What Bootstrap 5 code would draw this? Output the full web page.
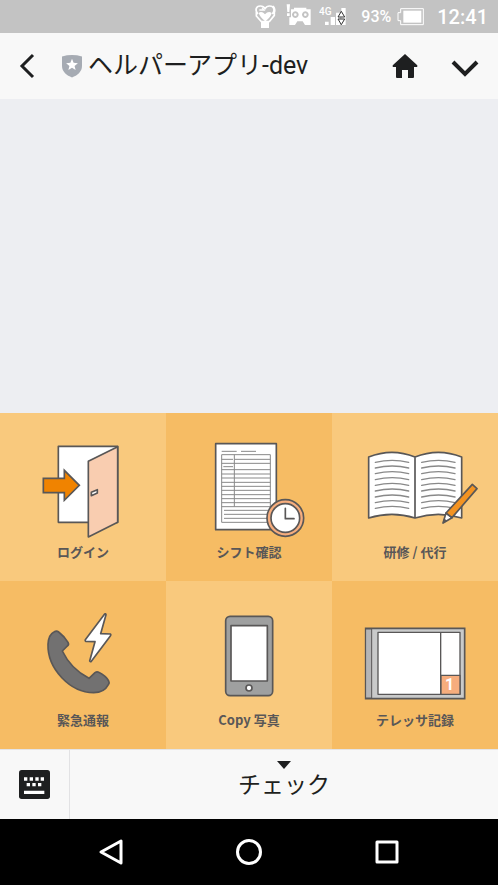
<!DOCTYPE html>
<html lang="ja">
<head>
<meta charset="utf-8">
<meta name="viewport" content="width=device-width, initial-scale=1">
<title>ヘルパーアプリ-dev</title>
<link href="https://cdn.jsdelivr.net/npm/bootstrap@5.3.0/dist/css/bootstrap.min.css" rel="stylesheet">
<style>
body{font-family:Roboto,"Noto Sans CJK JP",sans-serif;color:#1e1f20;background:#edeef2}
svg{display:block;flex:none}
.status{background:#c3c3c3;height:33px;gap:6px;padding-right:10px;color:#fff;line-height:34px}
.level{font-size:16px;font-weight:500}
.clock{font-size:20px;font-weight:500}
.bar{background:#f8f8f8}
.topbar{height:66px;padding:0 18px}
.title-text{font-size:25px;line-height:36px;font-weight:400;margin:0 0 0 6px}
.plain{border:0;padding:0;background:none;color:inherit}
.actions{gap:32px}
.tile{background:#f9c97d;color:#595757;padding-bottom:18px}
.tile-dark{background:#f6bc64}
.tile-label{font-family:"Noto Sans CJK JP",sans-serif;font-size:13px;font-weight:700;line-height:22px}
.art{stroke:#595757;stroke-width:5;stroke-linejoin:round;stroke-linecap:round;fill:#fff}
.footer-bar{height:70px;border-top:1px solid #e4e4e6}
.keys{width:70px;border-right:1px solid #e2e2e4}
.menu-text{font-size:23px;line-height:34px}
.menu-button{padding-bottom:6px}
.softkeys{background:#000;height:66px;padding:0 42px}
.softkeys svg{fill:none;stroke:#fff;stroke-width:3;stroke-linejoin:round}
</style>
<script src="https://cdn.jsdelivr.net/npm/bootstrap@5.3.0/dist/js/bootstrap.bundle.min.js"></script>
</head>
<body>
<div class="d-flex flex-column min-vh-100">
  <div class="status d-flex align-items-center justify-content-end">
    <svg width="26" height="33" viewBox="45 0 78 99" fill="none" stroke="#fff" stroke-width="5" aria-hidden="true"><path d="M57 42C47 32 50 18 64 18c8 0 12 4 14 8 3-5 8-8 14-8 14 0 17 14 8 24M52 36v12l16 18M106 36v10L90 66M102 18q8 10 4 20"/><path fill="#fff" stroke="none" d="M59 39q9-7 19 4 10-11 20-4-2 12-19 25-16-12-20-25zM66 62h24v22H66z"/><path d="M61 30h14l-6-7" stroke-width="4"/></svg>
    <svg width="27" height="33" viewBox="141 0 81 99" fill="#fff" aria-hidden="true"><path d="M143 13h10l-2 23h-6zM144 40h8v8h-8z"/><path fill-rule="evenodd" d="M156 28h9v-5h37v5h13v47h-17l-7-11h-16l-7 11h-17V52h5zM169 34a10 10 0 1 0 .1 0zM199 34a10 10 0 1 0 .1 0z"/><circle cx="169" cy="44" r="4"/><circle cx="199" cy="44" r="4"/></svg>
    <svg width="36" height="33" viewBox="240 0 108 99" fill="#fff" role="img" aria-label="4G"><text x="240" y="44" font-family="Roboto,sans-serif" font-size="30" font-weight="500">4G</text><path d="M258 65h11v10h-11zM275 51h13v24h-13zM291 38h13v37h-13zM307 24h13v51h-13z"/><path d="M297 51l10-17 10 17zM297 57l10 17 10-17z" stroke="#333" stroke-width="3"/></svg>
    <span class="level">93%</span>
    <svg width="34" height="33" viewBox="474 0 102 99" aria-hidden="true"><path d="M485 26h68v48h-68V62h-8V38h8z" fill="none" stroke="#fff" stroke-width="3"/><path d="M493 32h54v36h-54z" fill="#fff"/></svg>
    <span class="clock">12:41</span>
  </div>

  <header class="bar topbar d-flex align-items-center">
    <button class="plain" type="button" aria-label="戻る"><svg width="20" height="30" viewBox="0 0 20 30" fill="none" stroke="#1e1f20" stroke-width="3"><path d="M15 4L4 15l11 11"/></svg></button>
    <svg class="ms-4" width="20" height="24" viewBox="0 0 21 24" aria-hidden="true"><path fill="#a6abb3" d="M0 2Q10.500-1 21 2v10c0 6-5 10-10.500 12C5 22 0 18 0 12z"/><path fill="#fff" d="M10.500 4.500l1.700 4.200 4.500.3-3.500 2.900 1.100 4.400-3.800-2.400-3.800 2.400 1.100-4.400L4.300 9l4.500-.3z"/></svg>
    <h1 class="title-text">ヘルパーアプリ-dev</h1>
    <div class="actions d-flex align-items-center ms-auto">
      <button class="plain" type="button" aria-label="ホーム"><svg width="26" height="24" viewBox="0 0 26 24" fill="#1e1f20"><path d="M13 0l12 11q1 1 0 2h-3v10q0 1-1 1h-5v-8h-6v8H5q-1 0-1-1V13H1q-1-1 0-2z"/></svg></button>
      <button class="plain" type="button" aria-label="閉じる"><svg width="30" height="24" viewBox="0 0 30 24" fill="none" stroke="#1e1f20" stroke-width="4"><path d="M3 8l12 12L27 8"/></svg></button>
    </div>
  </header>

  <main class="flex-grow-1"></main>

  <nav class="row row-cols-3 g-0" aria-label="メニュー">
    <button class="col plain tile" type="button">
      <svg class="art w-100" viewBox="0 9 498 384"><path d="M175 109h178v228H175z"/><path fill="#f9cdb0" d="M265 154l88-44v227l-88 44z"/><path d="M274 247l18-8v10l-18 8z"/><path fill="#f08300" stroke-linejoin="miter" d="M130 205h63v-24l45 45-45 45v-23h-63z"/></svg>
      <span class="tile-label d-block">ログイン</span>
    </button>
    <button class="col plain tile tile-dark" type="button">
      <svg class="art w-100" viewBox="3 9 498 384"><path d="M152 101h182v258H152z"/><path fill="none" stroke="#898989" stroke-width="3" stroke-linecap="butt" d="M170 124h45M228 124h45M170 134h146v203H170zM208 134v156M170 148h34M208 148h108M170 160h146M175 170h29M170 179h146M170 192h146M170 204h146M170 217h146M170 229h146M170 241h146M170 254h146M170 266h146M170 278h146M170 290h146M177 301h139M177 313h139M177 325h139"/><circle cx="361" cy="324" r="55" fill="#f6ad7d"/><circle cx="361" cy="324" r="43"/><path fill="none" d="M361 295v31h26"/></svg>
      <span class="tile-label d-block">シフト確認</span>
    </button>
    <button class="col plain tile" type="button">
      <svg class="art w-100" viewBox="6 9 498 384"><path d="M116 141q70-28 139 0 70-28 140 0v183q-70-22-140 0-69-22-139 0zM255 141v183"/><g fill="none" stroke="#898989" stroke-width="4"><path id="rules" d="M136 157q51-12 100 0M136 174q51-12 100 0M136 191q51-12 100 0M136 209q51-12 100 0M136 226q51-12 100 0M136 243q51-12 100 0M136 261q51-12 100 0M136 278q51-12 100 0M136 295q51-12 100 0"/><use href="#rules" x="139"/></g><path d="M339 339l9-30 18 14z"/><path fill="#f39322" d="M348 309l79-86 14 13-75 87z"/><path fill="#595757" stroke="none" d="M338 341l4-16 10 8z"/></svg>
      <span class="tile-label d-block">研修 / 代行</span>
    </button>
    <button class="col plain tile tile-dark" type="button">
      <svg class="art w-100" viewBox="0 3 498 384"><path fill="#727171" d="M163 155q7-4 13 1 19 15 28 31 4 7-2 11l-15 15q25 53 80 82l18-17q6-4 11-1 22 11 30 26 3 5-1 11-12 24-44 24c-70 0-139-71-137-145 1-19 6-32 19-38z"/><path d="M314 102q3-2 4 2l-16 57 29 1q3 2 0 6l-57 76q-3 3-5-1l16-58-28-1q-3-2 0-6z"/></svg>
      <span class="tile-label d-block">緊急通報</span>
    </button>
    <button class="col plain tile" type="button">
      <svg class="art w-100" viewBox="3 3 498 384"><rect x="182" y="109" width="141" height="238" rx="13" fill="#9fa0a0"/><path d="M198 137h109v166H198z"/><circle cx="252" cy="324" r="9"/></svg>
      <span class="tile-label d-block">Copy 写真</span>
    </button>
    <button class="col plain tile tile-dark" type="button">
      <svg class="art w-100" viewBox="6 3 498 384"><path fill="#c9caca" stroke-linejoin="miter" d="M107 145h297v211H107z"/><path fill="#b5b5b6" stroke-width="3" d="M108 147h17v207h-17z"/><path stroke-width="4" d="M144 157h246v186H144zM332 157v186"/><path fill="#f6ad7d" stroke-width="4" d="M333 286h57v57h-57z"/><text x="359" y="331" text-anchor="middle" fill="#fff" stroke="none" font-family="Roboto,sans-serif" font-size="48" font-weight="700">1</text></svg>
      <span class="tile-label d-block">テレッサ記録</span>
    </button>
  </nav>

  <footer class="bar footer-bar d-flex">
    <button class="plain keys d-flex align-items-center justify-content-center" type="button" aria-label="キーボード"><svg width="31" height="29" viewBox="0 0 93 87"><rect width="93" height="87" rx="8" fill="#1e1f20"/><path fill="#fff" d="M15 22h10v10H15zM32 22h10v10H32zM49 22h10v10H49zM65 22h10v10H65zM23 39h10v10H23zM40 39h10v10H40zM57 39h10v10H57zM15 62h61v10H15z"/></svg></button>
    <button class="plain menu-button flex-grow-1 d-flex flex-column align-items-center justify-content-center" type="button"><svg width="14" height="8" viewBox="0 0 14 8" fill="#1e1f20"><path d="M0 0h14L7 8z"/></svg><span class="menu-text">チェック</span></button>
  </footer>

  <div class="softkeys d-flex align-items-center">
    <button class="plain col d-flex justify-content-center" type="button" aria-label="Back"><svg width="26" height="28" viewBox="0 0 26 28"><path d="M23 3v22L3 14z"/></svg></button>
    <button class="plain col d-flex justify-content-center" type="button" aria-label="Home"><svg width="28" height="28" viewBox="0 0 28 28"><circle cx="14" cy="14" r="11.500"/></svg></button>
    <button class="plain col d-flex justify-content-center" type="button" aria-label="Recent"><svg width="26" height="26" viewBox="0 0 26 26"><path d="M3 3h20v20H3z"/></svg></button>
  </div>
</div>
</body>
</html>
